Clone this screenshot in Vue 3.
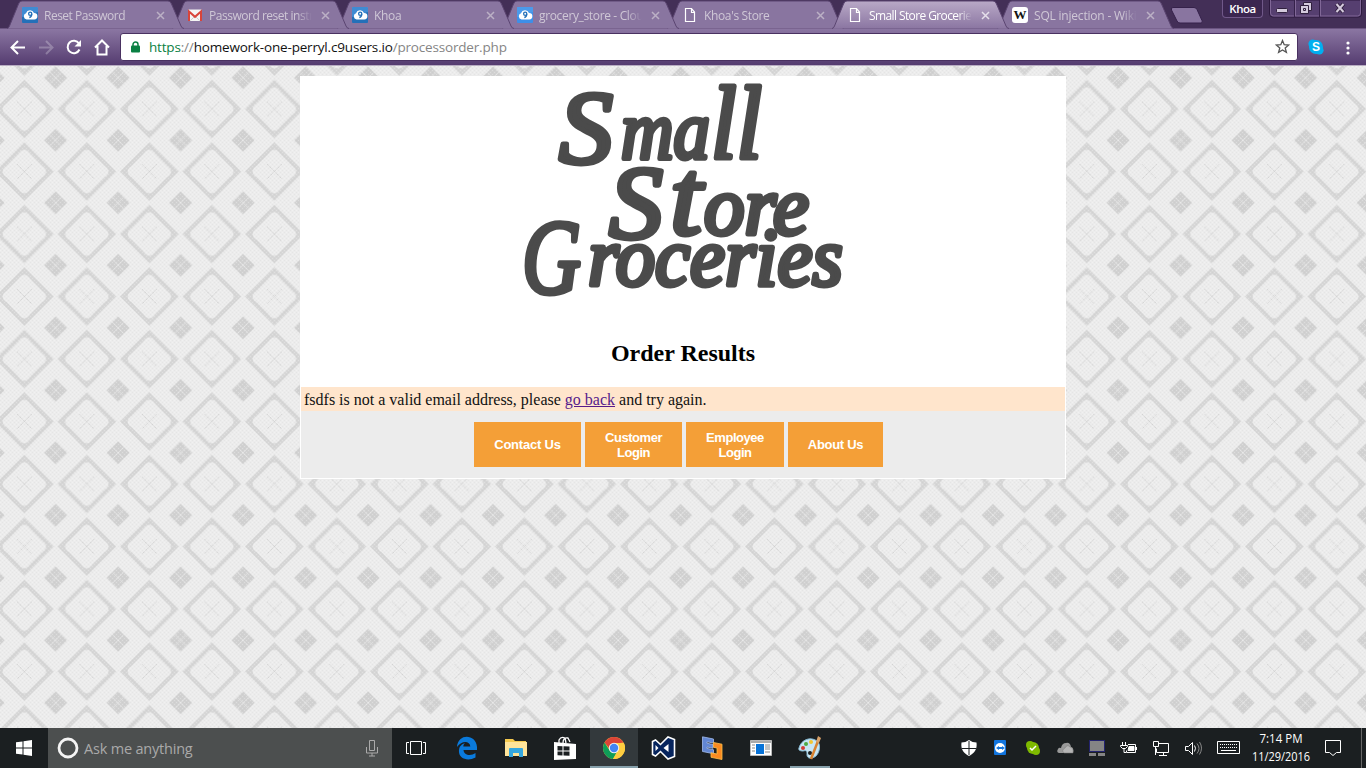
<script setup>
const tabs = [
  { title: 'Reset Password', icon: 'cloud', bg: '#2470b8', ls: -0.5 },
  { title: 'Password reset instructions', icon: 'mail', ls: -0.48 },
  { title: 'Khoa', icon: 'cloud', bg: '#2470b8', ls: -0.3 },
  { title: 'grocery_store - Cloud9', icon: 'cloud', bg: '#3d8fe8', ls: -0.35 },
  { title: "Khoa's Store", icon: 'page', ls: -0.36 },
  { title: 'Small Store Groceries', icon: 'page', active: true, ls: -0.6 },
  { title: 'SQL injection - Wikipedia', icon: 'wiki', ls: -0.2 },
]
</script>

<template>
  <div class="screen">
    <header class="frame">
      <div class="tabs">
        <div v-for="(t, i) in tabs" :key="i" class="tab" :class="{ active: t.active }" :style="{ zIndex: t.active ? 20 : 10 - i }">
          <svg class="shape" width="178" height="29" viewBox="0 0 178 29">
            <defs>
              <linearGradient id="act" x1="0" y1="0" x2="0" y2="1">
                <stop offset="0" stop-color="#b9a9c7" /><stop offset="1" stop-color="#8b76a2" />
              </linearGradient>
            </defs>
            <path d="M0 28.500Q1.500 28.500 2.500 26L11.500 4Q12.500 1 15 1H161Q163.500 1 164.500 4L174 26Q175 28.500 177 28.500Z" :fill="t.active ? 'url(#act)' : '#8975a0'" />
            <path d="M0 28.500Q1.500 28.500 2.500 26L11.500 4Q12.500 1 15 1H161Q163.500 1 164.500 4L174 26Q175 28.500 177 28.500" fill="none" stroke="#5b4571" />
          </svg>
          <span class="fav">
            <svg v-if="t.icon === 'cloud'" width="16" height="16" viewBox="0 0 16 16">
              <rect width="16" height="16" rx="1" :fill="t.bg" /><path d="M0 0h16v5L0 10z" fill="#5aa5ee" opacity=".5" />
              <path d="M4.500 12.500a3.200 3.200 0 0 1-.5-6.200 4.300 4.300 0 0 1 8-.4 3.200 3.200 0 0 1 .2 6.600z" fill="#fff" />
              <circle cx="8.200" cy="6.800" r="1.600" fill="none" stroke="#2470b8" stroke-width="1.300" /><path d="M9.800 7q0 3-2.500 3.500" fill="none" stroke="#2470b8" stroke-width="1.300" />
            </svg>
            <svg v-else-if="t.icon === 'mail'" width="16" height="16" viewBox="0 0 16 16">
              <rect x="1" y="2.500" width="14" height="11.500" rx="1" fill="#f4f4f4" />
              <path d="M3.500 13.500L7 10M12.500 13.500L9 10" stroke="#ccc" />
              <path d="M2 14V4.500L8 9.800 14 4.500V14" fill="none" stroke="#d8443a" stroke-width="2" />
            </svg>
            <svg v-else-if="t.icon === 'page'" width="16" height="16" viewBox="0 0 16 16">
              <path d="M3.500 1.500h6l3 3.500v9.500h-9zM9.500 1.500v4h3" fill="none" stroke="#fff" stroke-width="1.200" />
            </svg>
            <span v-else class="wiki">W</span>
          </span>
          <span class="title" :style="{ letterSpacing: t.ls + 'px' }">{{ t.title }}</span>
          <svg class="close" width="9" height="9" viewBox="0 0 9 9"><path d="M1 1l7 7M8 1L1 8" stroke="currentColor" stroke-width="1.500" /></svg>
        </div>
      </div>
      <svg class="newtab" width="34" height="17" viewBox="0 0 34 17"><path d="M3 .5H24q2 0 3 2l5 11q1 2.500-1 2.500H10q-2 0-3-2L1.500 3Q.7.500 3 .5z" fill="#8975a0" stroke="#35214a" /></svg>
      <div class="user">Khoa</div>
      <svg class="controls" width="94" height="18" viewBox="0 0 94 18">
        <path d="M.5 0v14q0 3 3 3h86q3 0 3-3V0z" fill="#563f70" stroke="#2c193e" />
        <path d="M1.500 0v13q0 3 3 3h84q3 0 3-3V0M26.500 0v16M51.500 0v16" fill="none" stroke="#806797" />
        <path d="M25.500 0v17M50.500 0v17" stroke="#35214a" />
        <rect x="7.500" y="8.500" width="11" height="4" rx="1" fill="#d4cadd" stroke="#30203e" />
        <path d="M34.500 2.500h8v8h-3v3h-8v-8h3z" fill="#d4cadd" stroke="#30203e" /><path d="M34 5.500h5.500V11M34.500 8.500h2v2h-2z" fill="none" stroke="#30203e" />
        <path d="M67.500 4l7 8M74.500 4l-7 8" stroke="#30203e" stroke-width="4" /><path d="M67.500 4l7 8M74.500 4l-7 8" stroke="#d4cadd" stroke-width="2" />
      </svg>
    </header>

    <div class="toolbar">
      <svg class="nav" width="121" height="36" viewBox="0 0 121 36">
        <g fill="none" stroke="#fff" stroke-width="2">
          <path d="M25 18.500H12.500M18 12l-6.500 6.500L18 25" />
          <path d="M39 18.500h12.500M46 12l6.500 6.500L46 25" opacity=".25" />
          <path d="M79 14.500A6.200 6.200 0 1 0 79.500 20.500" />
          <path d="M95 18.500l7-7 7 7M97.500 17v8.500h9V17" />
        </g>
        <path d="M81 11v6.500h-6.500z" fill="#fff" />
      </svg>
      <div class="omnibox">
        <svg class="lock" width="9" height="12" viewBox="0 0 9 12"><path d="M2 5V3.500a2.500 2.500 0 0 1 5 0V5" fill="none" stroke="#0a8043" stroke-width="1.500" /><rect y="4.500" width="9" height="7" rx="1" fill="#0a8043" /></svg>
        <span class="url"><span class="https">https</span><i>://</i>homework-one-perryl.c9users.io<i>/processorder.php</i></span>
        <svg class="star" width="15" height="15" viewBox="0 0 15 15"><path d="M7.500 1.500l1.700 4.200 4.500.3-3.500 2.900 1.200 4.500-3.900-2.500-3.900 2.500 1.200-4.500L1.300 6l4.500-.3z" fill="none" stroke="#555" stroke-width="1.300" /></svg>
      </div>
      <svg class="ext" width="16" height="16" viewBox="0 0 16 16"><circle cx="8" cy="8" r="7" fill="#00aff0" /><circle cx="4.700" cy="4.700" r="4.300" fill="#00aff0" /><circle cx="11.300" cy="11.300" r="4.300" fill="#00aff0" /><text x="8" y="12" text-anchor="middle" font-size="12" font-weight="bold" fill="#fff" font-family="Liberation Sans, sans-serif">S</text></svg>
      <svg class="dots" width="4" height="14" viewBox="0 0 4 14"><circle cx="2" cy="2" r="1.600" fill="#fff" /><circle cx="2" cy="7" r="1.600" fill="#fff" /><circle cx="2" cy="12" r="1.600" fill="#fff" /></svg>
    </div>

    <main class="page">
      <svg class="wall" width="1366" height="662">
        <defs>
          <pattern id="weave" x="-6.900" y="11.800" width="62.500" height="62.500" patternUnits="userSpaceOnUse">
            <rect width="62.500" height="62.500" fill="#ececec" />
            <path d="M31.250 2L60.500 31.250 31.250 60.500 2 31.250z" fill="#d6d6d6" />
            <path d="M25.500 13.500Q31.250 5.500 37 13.500L49 25.500Q57 31.250 49 37L37 49Q31.250 57 25.500 49L13.500 37Q5.500 31.250 13.500 25.500z" fill="#ececec" />
            <path d="M24 24l14.500 14.500M38.500 24L24 38.500" stroke="#c6c6c6" stroke-width=".8" stroke-dasharray="1.200 .8" />
            <g fill="#d1d1d1"><path d="M0-11.500L11.500 0 0 11.500-11.500 0z" /><path d="M62.500-11.500L74 0 62.500 11.500 51 0z" /><path d="M0 51L11.500 62.500 0 74-11.500 62.500z" /><path d="M62.500 51L74 62.500 62.500 74 51 62.500z" /></g>
            <path d="M0 0l5.500 5.500M62.500 0l-5.500 5.500M0 62.500l5.500-5.500M62.500 62.500l-5.500-5.500" stroke="#f5f5f5" stroke-width=".5" />
          </pattern>
          <pattern id="grain" width="4" height="4" patternUnits="userSpaceOnUse"><path d="M0 0h1v1H0zM2 2h1v1H2z" fill="#fff" opacity=".25" /><path d="M2 0h1v1H2zM0 2h1v1H0z" fill="#999" opacity=".08" /></pattern>
        </defs>
        <rect width="1366" height="662" fill="url(#weave)" /><rect width="1366" height="662" fill="url(#grain)" />
      </svg>
      <section class="sheet">
        <svg class="logo" width="764" height="250" viewBox="301 77 764 250">
          <text x="559" y="163" font-size="103" textLength="54" lengthAdjust="spacingAndGlyphs">S</text>
          <text x="621" y="158" font-size="82" textLength="89" lengthAdjust="spacingAndGlyphs">ma</text>
          <text x="711" y="158" font-size="103" textLength="51" lengthAdjust="spacingAndGlyphs">ll</text>
          <text x="609" y="238" font-size="103" textLength="54" lengthAdjust="spacingAndGlyphs">S</text>
          <text x="670" y="234" font-size="108" textLength="32" lengthAdjust="spacingAndGlyphs">t</text>
          <text x="704" y="234" font-size="82" textLength="105" lengthAdjust="spacingAndGlyphs">ore</text>
          <text x="522" y="293" font-size="106" textLength="59" lengthAdjust="spacingAndGlyphs">G</text>
          <text x="588" y="285" font-size="82" textLength="255" lengthAdjust="spacingAndGlyphs">roceries</text>
        </svg>
        <h2>Order Results</h2>
        <p class="notice">fsdfs is not a valid email address, please <a>go back</a> and try again.</p>
        <footer>
          <button class="b1">Contact Us</button><button class="b2">Customer<br />Login</button><button class="b3">Employee<br />Login</button><button class="b4">About Us</button>
        </footer>
      </section>
    </main>

    <div class="taskbar">
      <div class="start"><svg width="16" height="16" viewBox="0 0 16 16"><path d="M0 2.300L6.500 1.400V7.500H0zM7.500 1.200L16 0v7.500H7.500zM0 8.500h6.500v6.100L0 13.700zM7.500 8.500H16V16l-8.500-1.200z" fill="#fff" /></svg></div>
      <div class="search">
        <svg width="22" height="22" viewBox="0 0 22 22"><circle cx="11" cy="11" r="9" fill="none" stroke="#f4f4f4" stroke-width="2.800" /></svg>
        <span>Ask me anything</span>
        <svg width="12" height="17" viewBox="0 0 12 17"><path d="M3.500.5h5v10h-5zM.5 7v6h11V7M6 13v3M3 16h6" fill="none" stroke="#aaa" /></svg>
      </div>
      <div class="app"><svg width="20" height="14" viewBox="0 0 20 14"><path d="M4.500.5h11v13h-11zM3 1.500H.5v11H3M17 1.500h2.500v11H17" fill="none" stroke="#fff" /></svg></div>
      <div class="apps">
        <div class="app"><svg width="22" height="24" viewBox="0 0 22 24"><path d="M1 11C2-3 20-2 21 11v3H7.500c.5 6 8 6 12 3v4.500C11 26 2 22 3 14c.4-4 3-6 6-7-1 1-1.600 2-1.700 3.500h7C14 5 6 4 1 11z" fill="#0a7adc" /></svg></div>
        <div class="app"><svg width="22" height="20" viewBox="0 0 22 20"><path d="M0 2.500V1h8l2 2h11v14H0z" fill="#f5c94e" /><path d="M0 4h22v14H0z" fill="#ffe49a" /><path d="M4 19v-8q0-1 1-1h12q1 0 1 1v8h-4v-4H8v4z" fill="#35a7df" /></svg></div>
        <div class="app"><svg width="22" height="25" viewBox="0 0 22 25"><path d="M5 8V4q2-4 6-2l1 5M9 7q0-6 5-5l2 4" fill="none" stroke="#fff" stroke-width="1.300" /><path d="M0 6l22 2v15L0 24z" fill="#fff" /><path d="M3.500 10l5 .2v4.300h-5zM9.500 10.300l6 .3v3.900h-6zM3.500 15.500h5v4l-5-.3zM9.500 15.500h6v4.300l-6-.3z" fill="#1b1f21" /></svg></div>
        <div class="app on"><svg width="22" height="22" viewBox="0 0 22 22"><circle cx="11" cy="11" r="11" fill="#ffcd40" /><path d="M1.500 5.500A11 11 0 0 1 20.500 5.500L11 7 9 15z" fill="#db4437" /><path d="M1.500 5.500L6.700 13.500 14 14.500 10 22A11 11 0 0 1 1.500 5.500z" fill="#0f9d58" /><path d="M11 6h9.800A11 11 0 0 1 10 22l5.500-8.500z" fill="#ffcd40" /><circle cx="11" cy="11" r="5.200" fill="#f1f1f1" /><circle cx="11" cy="11" r="4.200" fill="#4285f4" /></svg></div>
        <div class="app"><svg width="25" height="24" viewBox="0 0 25 24"><path d="M1.500 5.500l3-1.500 5 4.500L17 1l6.500 2.500v17L17 23l-7.500-7.500-5 4.500-3-1.500z" fill="#06245d" stroke="#fff" stroke-width="1.600" /><path d="M4.500 9v6l3-3zM17.500 8v8L12.500 12z" fill="#fff" /></svg></div>
        <div class="app"><svg width="22" height="24" viewBox="0 0 22 24"><path d="M1.500.8l11 2.200v4L6 5.800v1.400l6 1.300v3.800L6 11v1.400l6.500 1.300v4L1.500 15.500z" fill="#6286d2" stroke="#a2bbec" stroke-width=".8" /><path d="M12.500 6.500l8.500 1.700v15.300l-11-2.200v-4.500l6 1.200v-6l-3.500-.7z" fill="#f98a22" stroke="#ffc14a" stroke-width=".8" /></svg></div>
        <div class="app"><svg width="22" height="16" viewBox="0 0 22 16"><path d="M.5.500h21v15H.5z" fill="#fff" stroke="#b9b9b9" /><path d="M1 1h20v2H1z" fill="#aaa" /><path d="M6 4h8v10H6z" fill="#0873d8" /><path d="M2 5h3M2 8h3M2 11h3M15 5h5M15 7h5M15 9h5M15 12h5" stroke="#888" /></svg></div>
        <div class="app paint"><svg width="24" height="24" viewBox="0 0 24 24"><path d="M1 12C3 4 12 0 19 5c4 3 3 11-1 15-5 4-9 2-9-1 0-4 0-5-4-4-3 0-5-1-4-3z" fill="#c8e6f5" stroke="#83b8d2" /><circle cx="5" cy="12" r="2" fill="#d43c37" /><circle cx="8" cy="8" r="2" fill="#4eaa45" /><circle cx="13" cy="6" r="2" fill="#f2c631" /><circle cx="12" cy="17" r="2" fill="#1b1f21" /><path d="M13 23L20 5" stroke="#d88331" stroke-width="2.500" /><path d="M18 6l2-6 3 2-2 5z" fill="#d8a169" /></svg></div>
      </div>
      <div class="tray">
        <svg width="396" height="40" viewBox="970 728 396 40">
          <path d="M961.500 742.500q4 0 7.500-2.500 3.500 2.500 7.500 2.500c1 7-2.500 11-7.500 13.500-5-2.500-8.500-6.500-7.500-13.500z" fill="#fff" /><path d="M969 741v14M962 748.500h14" stroke="#1b1f21" />
          <rect x="994" y="740" width="12" height="15" rx="1" fill="#1275df" /><circle cx="1000" cy="748" r="5" fill="#fff" /><path d="M996 748l3-2v1h3v-1l3 2-3 2v-1h-3v1z" fill="#1275df" />
          <circle cx="1033" cy="748" r="6" fill="#7fba00" /><circle cx="1030" cy="745" r="4" fill="#7fba00" /><circle cx="1036" cy="751" r="4" fill="#7fba00" /><path d="M1030 748l2 2 4-4" fill="none" stroke="#fff" stroke-width="1.500" />
          <path d="M1059 753q-3-1-1-4 1-2 3-1 1-5 5-5 4-1 5 4 3 0 2 6z" fill="#999" /><path d="M1064 753q-3-3 1-5 2-4 5-1 4 1 3 6z" fill="#b5b5b5" stroke="#777" stroke-width=".5" />
          <rect x="1089.500" y="740.500" width="15" height="11" fill="#858585" stroke="#23236e" /><path d="M1089 753h7v3h-7zM1098 753h7v3h-7z" fill="#858585" />
          <g fill="none" stroke="#fff"><path d="M1122.500 742v3M1125.500 742v3M1120.500 745.500h7v1l-2 2h-3l-2-2zM1124 748v4.500h2M1128 744.500h7.500v8h-9v-2M1136.500 747v3" /><path d="M1129 746.500h5v4h-6z" fill="#fff" /><path d="M1158 743.500h10.500v9h-12v-4M1153.500 741.500h5v5h-5zM1155.500 747v8M1163.500 753v3M1159 755.500h8" /><path d="M1185.500 746.500h3l4-4v12l-4-4h-3zM1194.500 745.500q2 2.500 0 6" /><path d="M1197 743.500q4 5 0 10M1199.500 742q4 6 0 12.500" stroke="#888" /><path d="M1217.500 741.500h22v12h-22z" /><path d="M1220 744.500h18M1220 747.500h18" stroke-dasharray="1 1" /><path d="M1221 750.500h15" /><path d="M1325.500 740.500h15v12h-4l-3.500 3-3.500-3h-4z" /></g>
          <path d="M1361.500 728v40" stroke="#666" />
          <g fill="#fff" font-family="Open Sans, Noto Sans, sans-serif" font-size="12" text-anchor="middle"><text x="1281" y="743" textLength="43" lengthAdjust="spacingAndGlyphs">7:14 PM</text><text x="1281" y="761" textLength="58" lengthAdjust="spacingAndGlyphs">11/29/2016</text></g>
        </svg>
      </div>
    </div>
  </div>
</template>

<style>
html, body { margin: 0; overflow: hidden; }
</style>

<style scoped>
.screen { width: 1366px; height: 768px; display: flex; flex-direction: column; overflow: hidden; font-family: "Open Sans", "Noto Sans", sans-serif; }
svg { display: block; flex: none; }
.frame { height: 29px; background: #432f57; display: flex; position: relative; box-sizing: border-box; padding-right: 3px; }
.frame::after { content: ""; position: absolute; left: 0; right: 0; bottom: 0; height: 1px; background: #6a5480; z-index: 15; }
.tabs { display: flex; padding-left: 7px; isolation: isolate; flex: none; z-index: 16; }
.tab { width: 165px; height: 29px; position: relative; display: flex; align-items: center; box-sizing: border-box; padding: 1px 0 0 15px; color: #cfc7d6; font-size: 12px; }
.tab.active { color: #fff; }
.shape { position: absolute; left: 0; top: 0; z-index: -1; }
.fav { width: 16px; height: 16px; margin-right: 6px; flex: none; position: relative; }
.wiki { display: block; width: 16px; height: 16px; border-radius: 3px; background: #fff; color: #111; font: bold 13px/16px "Liberation Serif", serif; text-align: center; }
.title { width: 105px; flex: none; white-space: nowrap; overflow: hidden; -webkit-mask-image: linear-gradient(90deg, #000 84%, transparent 98%); mask-image: linear-gradient(90deg, #000 84%, transparent 98%); }
.close { margin-left: 7px; color: #bbb0c5; }
.active .close { color: #e5dfea; }
.newtab { margin: 7px 0 0 8px; }
.user { margin-left: 18px; height: 17px; width: 39px; border: 1px solid #705889; border-top: 0; border-radius: 0 0 4px 4px; color: #fff; background: #3b2650; font-size: 11.500px; line-height: 17px; text-align: center; font-weight: 600; letter-spacing: -.5px; }
.controls { margin-left: auto; }
.toolbar { height: 37px; box-sizing: border-box; border-bottom: 1px solid #b8adc2; background: linear-gradient(#8b76a2, #553c70); display: flex; align-items: flex-start; }
.omnibox { margin: 4px 0 0 -1px; width: 1178px; height: 28px; box-sizing: border-box; border: 1px solid #493161; border-radius: 3px; background: #fff; display: flex; align-items: center; padding: 0 7px 1px 10px; }
.url { margin-left: 9px; font-size: 13.500px; letter-spacing: -.18px; color: #111; flex: 1; white-space: nowrap; }
.url i { font-style: normal; color: #858585; }
.https { color: #0a8043; }
.ext { margin: 10px 0 0 10px; }
.dots { margin: 12px 0 0 22px; }
.page { height: 662px; position: relative; overflow: hidden; padding-top: 10px; box-sizing: border-box; }
.wall { position: absolute; left: 0; top: 0; }
.sheet { position: relative; width: 766px; height: 403px; margin: 0 auto; box-sizing: border-box; border: 1px solid #fff; background: #fff; font-family: "Liberation Serif", serif; }
.logo text { fill: #4b4b4b; stroke: #4b4b4b; stroke-width: 5px; stroke-linejoin: round; font-family: "Liberation Serif", serif; font-style: italic; }
h2 { margin: 12px 0 0; height: 48px; line-height: 28px; text-align: center; font-size: 24px; color: #000; }
.notice { margin: 0; height: 24px; line-height: 25px; padding-left: 3px; background: #ffe5cc; color: #111; font-size: 16px; white-space: nowrap; }
.notice a { color: #551a8b; text-decoration: underline; }
footer { height: 67px; box-sizing: border-box; background: #ececec; padding: 11px 0 0 173px; display: flex; gap: 4px; }
button { height: 45px; border: 0; padding: 0; background: #f49f37; color: #fff; font: bold 13px/15px "Liberation Sans", Arial, sans-serif; letter-spacing: -.3px; }
.b1 { width: 107px; letter-spacing: -.2px; } .b2 { width: 97px; letter-spacing: -.45px; } .b3 { width: 98px; letter-spacing: -.45px; } .b4 { width: 95px; }
.taskbar { height: 40px; background: #1b1f21; display: flex; }
.start { width: 48px; display: flex; align-items: center; justify-content: center; }
.search { width: 344px; box-sizing: border-box; padding: 0 14px 0 9px; background: #4c4f4f; display: flex; align-items: center; }
.search span { margin-left: 5px; flex: 1; color: #a9a9a9; font-size: 14.500px; letter-spacing: -.2px; }
.app { width: 48px; height: 40px; display: flex; align-items: center; justify-content: center; box-sizing: border-box; }
.apps { display: flex; margin-left: 3px; gap: 1px; }
.on { background: #33393c linear-gradient(#86a0ab, #86a0ab) 0 100% / 100% 2px no-repeat; }
.paint { background: linear-gradient(#86a0ab, #86a0ab) 50% 100% / 40px 2px no-repeat; }
.tray { margin-left: auto; }
.tray svg { overflow: visible; }
</style>
